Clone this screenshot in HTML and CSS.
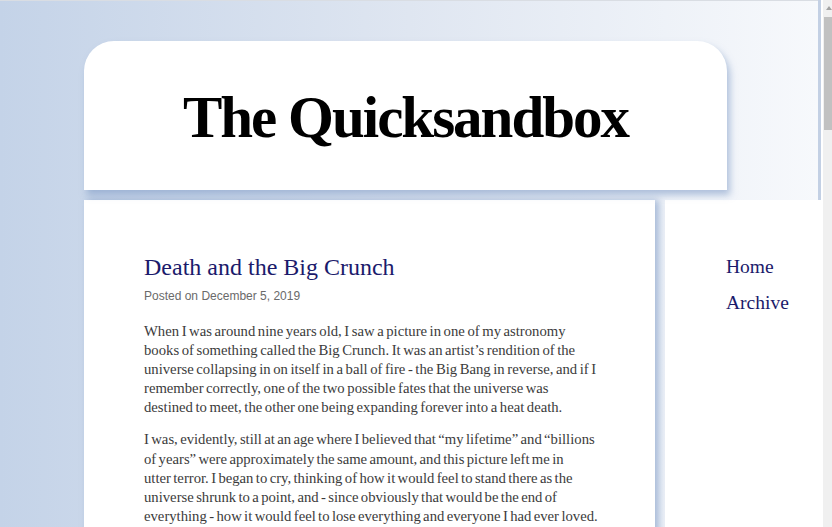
FILE: index.html
```html
<!DOCTYPE html>
<html lang="en">
<head>
<meta charset="utf-8">
<title>The Quicksandbox</title>
<link rel="stylesheet" href="styles.css">
</head>
<body>
<div class="page">
  <header class="site-header">
    <h1 class="site-title">The Quicksandbox</h1>
  </header>
  <div class="columns">
    <main class="content">
      <article class="post">
        <h2 class="post-title">Death and the Big Crunch</h2>
        <div class="post-meta">Posted on December 5, 2019</div>
        <p>When I was around nine years old, I saw a picture in one of my astronomy books of something called the Big Crunch. It was an artist’s rendition of the universe collapsing in on itself in a ball of fire - the Big Bang in reverse, and if I remember correctly, one of the two possible fates that the universe was destined&nbsp;to meet, the other one being expanding forever into a heat death.</p>
        <p class="tight">I was, evidently, still at an age where I believed that “my lifetime” and “billions of years” were approximately the same amount, and this picture left me in utter&nbsp;terror. I began to cry, thinking of how it would feel to stand there as the universe shrunk to a point, and - since obviously that would be the end of everything - how it would feel to lose everything and everyone I had ever loved.</p>
      </article>
    </main>
    <aside class="sidebar">
      <nav class="nav">
        <a href="#">Home</a>
        <a href="#">Archive</a>
      </nav>
    </aside>
  </div>
</div>
<div class="scrollbar">
  <div class="scroll-arrow"></div>
  <div class="scroll-thumb"></div>
</div>
</body>
</html>
```
FILE: styles.css
```css
html, body {
  margin: 0;
  padding: 0;
  background: #ffffff;
  overflow: hidden;
}

.page {
  width: 818px;
  min-height: 527px;
  box-sizing: border-box;
  border-top: 1px solid #d9dde3;
  padding: 40px 0 0 84px;
  background: linear-gradient(to right, #c4d3e8 0%, #dfe6f1 50%, #f7f9fc 100%);
  box-shadow: 3px 0 0 #c3d0e4;
}

.site-header {
  width: 643px;
  height: 149px;
  box-sizing: border-box;
  padding-top: 4px;
  background: #ffffff;
  border-radius: 30px 30px 0 0;
  box-shadow: 3px 5px 7px rgba(120, 150, 195, 0.55);
  display: flex;
  align-items: center;
  justify-content: center;
  position: relative;
  z-index: 1;
}

.site-title {
  margin: 0;
  font-family: "Liberation Serif", serif;
  font-weight: bold;
  font-size: 59px;
  color: #000000;
  letter-spacing: -2px;
}

.columns {
  display: flex;
  gap: 10px;
  margin-top: 10px;
  margin-right: -4px;
}

.content {
  width: 571px;
  background: #ffffff;
  box-shadow: 4px 0 7px rgba(120, 150, 195, 0.6);
  padding: 54px 53px 40px 60px;
  box-sizing: border-box;
  min-height: 330px;
}

.post-title {
  margin: 0;
  font-family: "Liberation Serif", serif;
  font-weight: normal;
  font-size: 24px;
  color: #1b1a6b;
}

.post-meta {
  margin-top: 8px;
  font-family: "Liberation Sans", Arial, sans-serif;
  font-size: 12px;
  color: #6a6a6a;
}

.post p {
  font-family: "Liberation Serif", serif;
  font-size: 14.7px;
  word-spacing: -1.1px;
  line-height: 19.1px;
  color: #3b3b3b;
  margin: 19px 0 13px;
}

.post p + p {
  margin-top: 13px;
}

.post p.tight {
  word-spacing: -1.3px;
}

.sidebar {
  flex: 1;
  background: #ffffff;
  padding: 55px 0 0 61px;
}

.nav {
  display: flex;
  flex-direction: column;
  gap: 12px;
}

.nav a {
  font-family: "Liberation Serif", serif;
  font-size: 19.5px;
  color: #1b1a6b;
  text-decoration: none;
  line-height: 24px;
}

.scrollbar {
  position: fixed;
  top: 0;
  right: 0;
  width: 9px;
  height: 100%;
  background: #f0f0f0;
}

.scroll-arrow {
  position: absolute;
  top: 6px;
  left: 3px;
  width: 0;
  height: 0;
  border-left: 3px solid transparent;
  border-right: 3px solid transparent;
  border-bottom: 4px solid #a3a3a3;
}

.scroll-thumb {
  position: absolute;
  top: 17px;
  left: 1px;
  right: 0;
  height: 113px;
  background: #c1c1c1;
}
```
